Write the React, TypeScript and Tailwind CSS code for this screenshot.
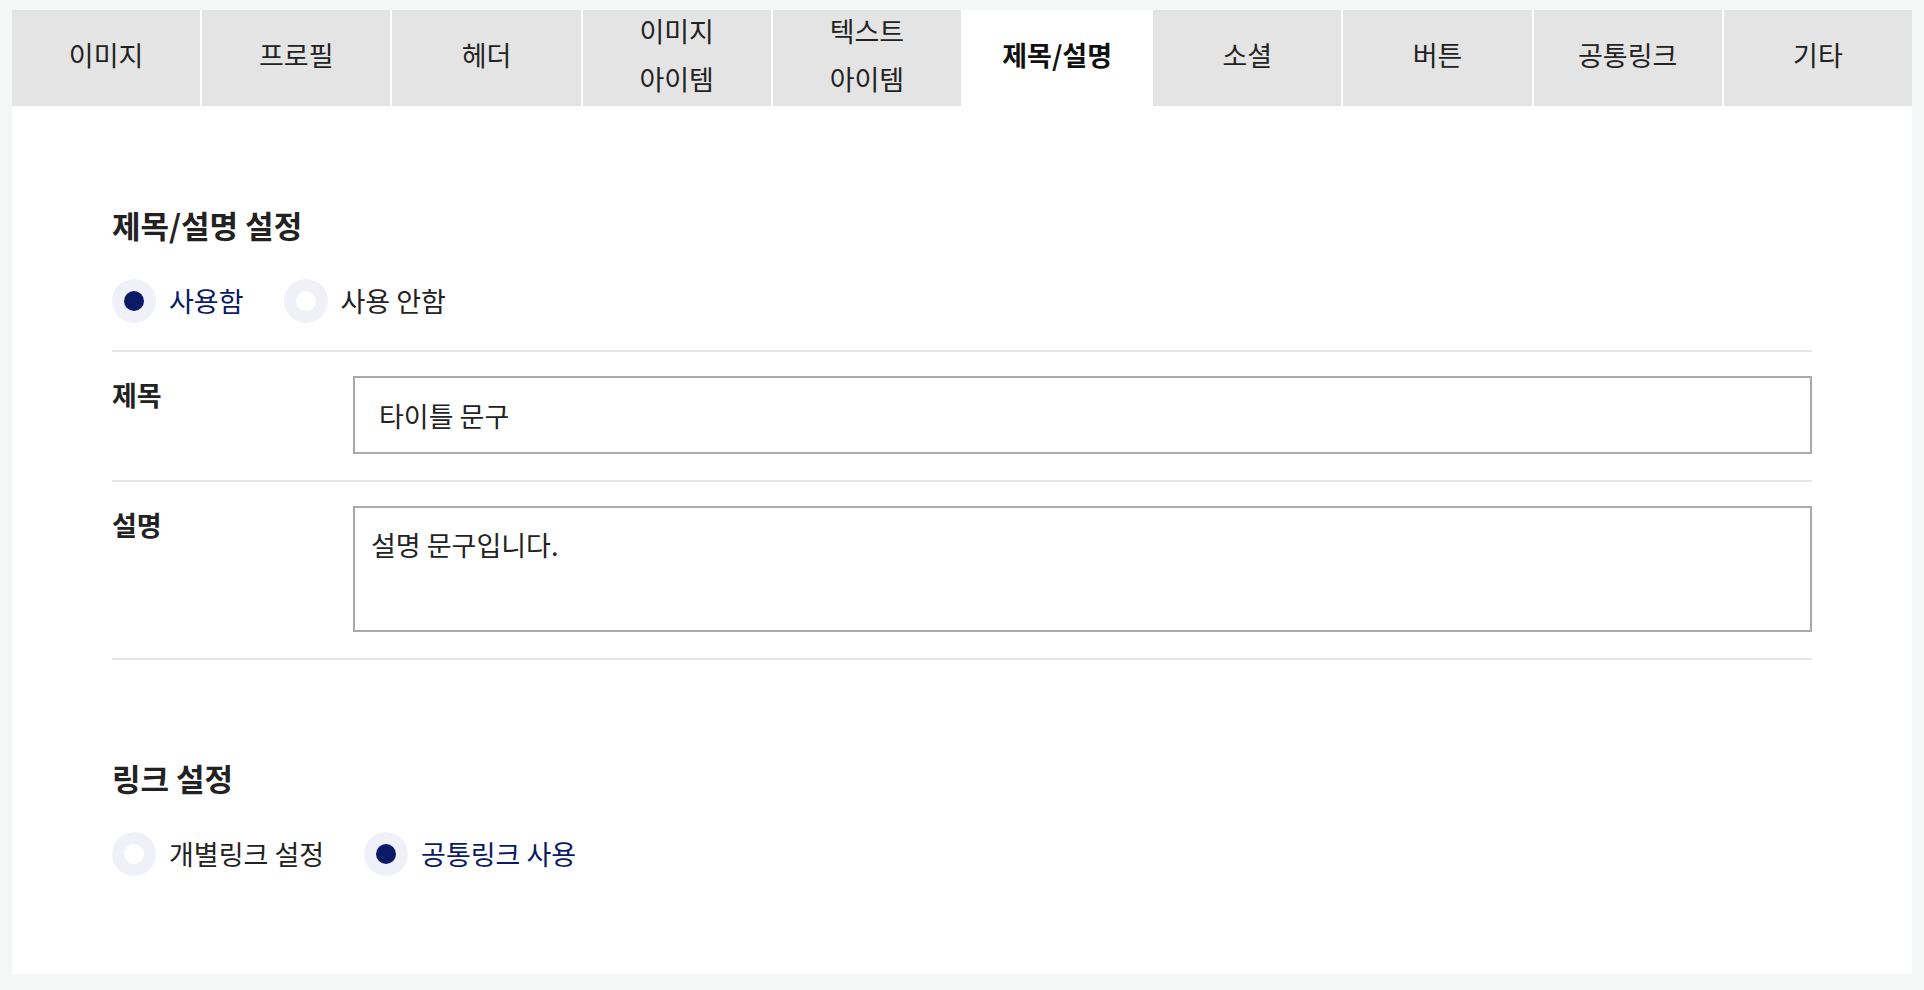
import { useState } from "react";

const tabs = [
  ["이미지"],
  ["프로필"],
  ["헤더"],
  ["이미지", "아이템"],
  ["텍스트", "아이템"],
  ["제목/설명"],
  ["소셜"],
  ["버튼"],
  ["공통링크"],
  ["기타"],
];

interface RadioProps {
  label: string;
  checked: boolean;
  onClick: () => void;
}

const Radio = ({ label, checked, onClick }: RadioProps) => {
  return (
    <button type="button" onClick={onClick} className="flex items-center mr-10 h-[44px]">
      <span className="flex items-center justify-center w-[44px] h-[44px] rounded-full bg-[#f0f1f8]">
        <span
          className={
            checked
              ? "w-[20px] h-[20px] rounded-full bg-[#0a1a66]"
              : "w-[20px] h-[20px] rounded-full bg-white"
          }
        />
      </span>
      <span
        className={
          checked
            ? "ml-[13px] text-[27px] leading-[40px] text-[#0a1a66]"
            : "ml-[13px] text-[27px] leading-[40px] text-[#222]"
        }
      >
        {label}
      </span>
    </button>
  );
};

const App = () => {
  const [active, setActive] = useState(5);
  const [useTitle, setUseTitle] = useState(true);
  const [commonLink, setCommonLink] = useState(true);

  return (
    <div className="min-h-screen bg-[#f5f7f6] pt-[10px] pb-[14px] pl-[12px] pr-[12px] font-['Noto_Sans_CJK_KR','Noto_Sans',sans-serif] text-[#222]">
      <div className="bg-white">
        <div className="flex h-[96px]">
          {tabs.map((lines, i) => (
            <button
              key={i}
              type="button"
              onClick={() => setActive(i)}
              className={
                (i === active ? "bg-white font-bold text-[#111] " : "bg-[#e4e4e4] text-[#222] ") +
                (i < tabs.length - 1 ? "border-r-2 border-white " : "") +
                "flex-1 flex flex-col items-center justify-center pb-[7px] text-[27px] leading-[48px]"
              }
            >
              {lines.map((l) => (
                <span key={l}>{l}</span>
              ))}
            </button>
          ))}
        </div>

        <div className="px-[100px] pt-[96px] pb-[98px]">
          <h2 className="text-[31px] leading-[45px] font-bold text-[#222]">제목/설명 설정</h2>
          <div className="flex mt-[32px] mb-[27px]">
            <Radio label="사용함" checked={useTitle} onClick={() => setUseTitle(true)} />
            <Radio label="사용 안함" checked={!useTitle} onClick={() => setUseTitle(false)} />
          </div>

          <div className="flex border-t-2 border-[#e6e6e6] pt-[24px] pb-[26px]">
            <label className="w-[241px] shrink-0 font-bold text-[27px] leading-[38px]">제목</label>
            <input
              defaultValue="타이틀 문구"
              className="flex-1 h-[78px] border-2 border-[#a9a9a9] px-[24px] text-[27px] text-[#222] outline-none"
            />
          </div>
          <div className="flex border-t-2 border-b-2 border-[#e6e6e6] pt-[24px] pb-[26px]">
            <label className="w-[241px] shrink-0 font-bold text-[27px] leading-[38px]">설명</label>
            <textarea
              defaultValue="설명 문구입니다."
              className="flex-1 h-[126px] border-2 border-[#a9a9a9] px-[16px] py-[17px] text-[27px] leading-[40px] text-[#222] outline-none resize-none"
            />
          </div>

          <h2 className="mt-[95px] text-[31px] leading-[45px] font-bold text-[#222]">링크 설정</h2>
          <div className="flex mt-[32px]">
            <Radio label="개별링크 설정" checked={!commonLink} onClick={() => setCommonLink(false)} />
            <Radio label="공통링크 사용" checked={commonLink} onClick={() => setCommonLink(true)} />
          </div>
        </div>
      </div>
    </div>
  );
};

export default App;
